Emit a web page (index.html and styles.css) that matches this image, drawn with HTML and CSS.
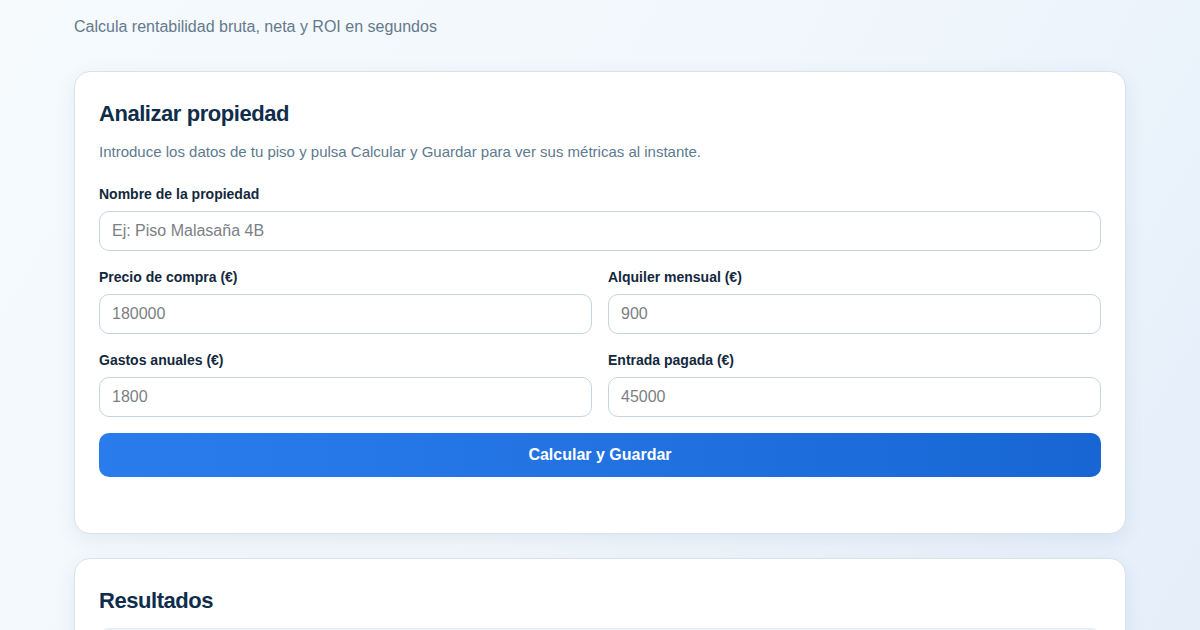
FILE: index.html
```html
<!DOCTYPE html>
<html lang="es">
<head>
<meta charset="utf-8">
<title>Analizador de rentabilidad</title>
<link rel="stylesheet" href="styles.css">
</head>
<body>
<div class="container">
  <header class="header">
    <p class="tagline">Calcula rentabilidad bruta, neta y ROI en segundos</p>
  </header>

  <section class="card form-card">
    <h2 class="card-title">Analizar propiedad</h2>
    <p class="card-sub">Introduce los datos de tu piso y pulsa Calcular y Guardar para ver sus métricas al instante.</p>

    <div class="field">
      <label class="label">Nombre de la propiedad</label>
      <input class="input" type="text" placeholder="Ej: Piso Malasaña 4B">
    </div>

    <div class="row">
      <div class="field">
        <label class="label">Precio de compra (€)</label>
        <input class="input" type="text" placeholder="180000">
      </div>
      <div class="field">
        <label class="label">Alquiler mensual (€)</label>
        <input class="input" type="text" placeholder="900">
      </div>
    </div>

    <div class="row">
      <div class="field">
        <label class="label">Gastos anuales (€)</label>
        <input class="input" type="text" placeholder="1800">
      </div>
      <div class="field">
        <label class="label">Entrada pagada (€)</label>
        <input class="input" type="text" placeholder="45000">
      </div>
    </div>

    <button class="btn" type="button">Calcular y Guardar</button>
  </section>

  <section class="card results-card">
    <h2 class="card-title">Resultados</h2>
    <div class="results-table"></div>
  </section>
</div>
</body>
</html>
```

FILE: styles.css
```css
* { box-sizing: border-box; }

html, body {
  margin: 0;
  padding: 0;
}

body {
  font-family: "Liberation Sans", Arial, sans-serif;
  background: linear-gradient(120deg, #f6fafd 0%, #f1f7fc 50%, #e4eefa 100%);
  min-height: 100vh;
  color: #12283d;
}

.container {
  width: 1052px;
  margin: 0 auto;
}

.header {
  padding-top: 15px;
}

.tagline {
  margin: 0;
  font-size: 16px;
  line-height: 24px;
  color: #64798c;
}

.card {
  background: #ffffff;
  border: 1px solid #d6e3ec;
  border-radius: 16px;
  box-shadow: 0 6px 20px rgba(30, 70, 110, 0.08);
  padding: 28px 24px 56px;
}

.form-card {
  margin-top: 32px;
}

.results-card {
  margin-top: 24px;
  padding-bottom: 24px;
}

.card-title {
  margin: 0 0 13px;
  font-size: 22px;
  line-height: 28px;
  font-weight: 700;
  color: #0f2d4b;
  letter-spacing: -0.45px;
}

.card-sub {
  margin: 0 0 21px;
  font-size: 15px;
  line-height: 22px;
  color: #5d7a90;
}

.row {
  display: grid;
  grid-template-columns: 1fr 1fr;
  column-gap: 16px;
}

.field {
  margin-bottom: 16px;
}

.label {
  display: block;
  font-size: 14px;
  line-height: 20px;
  font-weight: 700;
  color: #13283d;
  margin-bottom: 7px;
}

.input {
  display: block;
  width: 100%;
  height: 40px;
  border: 1px solid #c3d5e2;
  border-radius: 10px;
  padding: 0 12px;
  font-family: "Liberation Sans", Arial, sans-serif;
  font-size: 16px;
  color: #13283d;
  background: #ffffff;
  outline: none;
}

.input::placeholder {
  color: #7b7f84;
}

.btn {
  display: block;
  width: 100%;
  height: 44px;
  border: none;
  border-radius: 10px;
  background: linear-gradient(90deg, #2a7ced 0%, #2272e2 50%, #1766d4 100%);
  color: #ffffff;
  font-family: "Liberation Sans", Arial, sans-serif;
  font-size: 16px;
  font-weight: 700;
  cursor: pointer;
}

.results-table {
  height: 80px;
  margin-top: 12px;
  border-radius: 10px;
  background: #eef5fb;
  border: 1px solid #e3edf5;
}
```
